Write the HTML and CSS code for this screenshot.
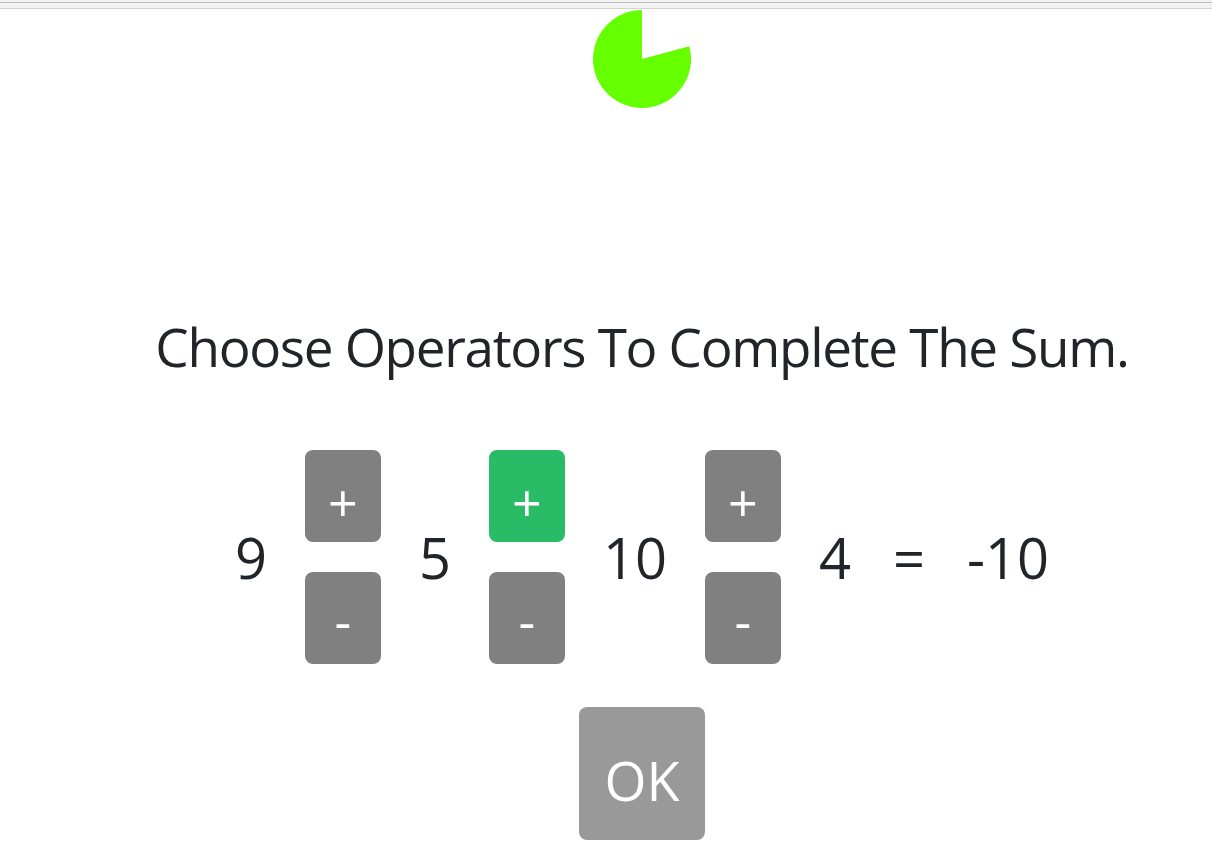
FILE: index.html
```html
<!DOCTYPE html>
<html lang="en">
<head>
<meta charset="utf-8">
<title>Choose Operators</title>
<link rel="stylesheet" href="styles.css">
</head>
<body>
<div class="topstrip"><div class="topbar"></div></div>
<main class="page">
  <div class="timer">
    <svg width="98" height="98" viewBox="0 0 98 98" aria-hidden="true">
      <path d="M49 49 L96.33 36.32 A49 49 0 1 1 49 0 Z" fill="#66ff00"/>
    </svg>
  </div>
  <h1 class="title">Choose Operators To Complete The Sum.</h1>
  <div class="sum">
    <span class="num">9</span>
    <div class="ops">
      <button class="op plus">+</button>
      <button class="op minus">-</button>
    </div>
    <span class="num">5</span>
    <div class="ops">
      <button class="op plus active">+</button>
      <button class="op minus">-</button>
    </div>
    <span class="num">10</span>
    <div class="ops">
      <button class="op plus">+</button>
      <button class="op minus">-</button>
    </div>
    <span class="num">4</span>
    <span class="num eq">=</span>
    <span class="num result">-10</span>
  </div>
  <div class="actions">
    <button class="ok">OK</button>
  </div>
</main>
</body>
</html>
```

FILE: styles.css
```css
* { box-sizing: border-box; }
html, body { margin: 0; padding: 0; background: #fff; }
body {
  font-family: "Open Sans", "Noto Sans", sans-serif;
  color: #212529;
}
.topstrip {
  background: #f2f2f2;
  padding-top: 2px;
}
.topbar {
  height: 7px;
  background: #f3f3f3;
  border-top: 1px solid #bdbdbd;
  border-bottom: 1px solid #d3d3d3;
}
.page {
  padding-left: 72px;
  display: flex;
  flex-direction: column;
  align-items: center;
}
.timer {
  margin-top: 1px;
  width: 98px;
  height: 98px;
}
.timer svg { display: block; }
.title {
  margin: 205px 0 0;
  font-size: 53px;
  letter-spacing: -1.3px;
  font-weight: 400;
  line-height: 67px;
  white-space: nowrap;
}
.sum {
  margin-top: 70px;
  display: flex;
  align-items: center;
  gap: 38px;
}
.num {
  font-size: 56px;
  line-height: 67px;
}
.eq, .result { margin-left: 4px; }
.ops {
  display: flex;
  flex-direction: column;
  gap: 30px;
}
.op {
  width: 76px;
  height: 92px;
  border: 0;
  border-radius: 8px;
  background: #808080;
  color: #fff;
  font-family: inherit;
  font-size: 52px;
  line-height: 52px;
  padding: 12px 0 0;
  display: block;
}
.op.minus { padding-top: 4px; }
.op.active { background: #29bb66; }
.actions {
  margin-top: 43px;
}
.ok {
  width: 126px;
  height: 133px;
  border: 0;
  border-radius: 8px;
  background: #999999;
  color: #fff;
  font-family: inherit;
  font-size: 54px;
  line-height: 54px;
  padding: 12px 0 0;
  display: block;
}
```
